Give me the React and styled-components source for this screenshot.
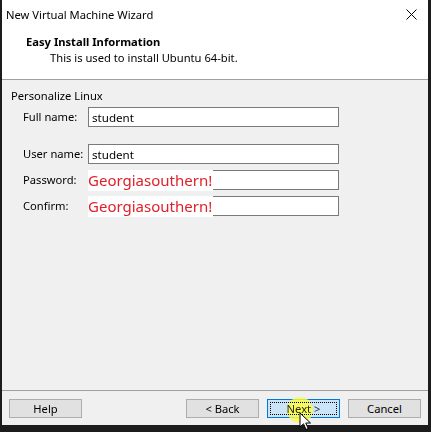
import React from 'react';
import styled, { createGlobalStyle, css } from 'styled-components';

const Global = createGlobalStyle`
  html, body {
    margin:0;
    padding:0;
    background:#1c1c1c;
  }
  body {
    font-family:"Noto Sans", "Open Sans", sans-serif;
    font-size:11.2px;
    color:#000;
  }
`;

export default function App() {
  return (
    <>
      <Global />
      <Page>
        <Window>
          <Header>
            <TitleBar>
              <Title>New Virtual Machine Wizard</Title>
              <Close>
                <svg width='11' height='11' viewBox='0 0 11 11'>
                  <path d='M0.5 0.5 L10.5 10.5 M10.5 0.5 L0.5 10.5' stroke='#000' strokeWidth='1' />
                </svg>
              </Close>
            </TitleBar>
            <Heading>Easy Install Information</Heading>
            <SubHeading>This is used to install Ubuntu 64-bit.</SubHeading>
          </Header>
          <Body>
            <GroupLabel>Personalize Linux</GroupLabel>
            <Form>
              <Row>
                <Label>Full name:</Label>
                <Field value='student' />
              </Row>
              <Row spaced>
                <Label>User name:</Label>
                <Field value='student' />
              </Row>
              <Row>
                <Label>Password:</Label>
                <FieldWrap>
                  <Field value='' />
                  <Secret>Georgiasouthern!</Secret>
                </FieldWrap>
              </Row>
              <Row>
                <Label>Confirm:</Label>
                <FieldWrap>
                  <Field value='' />
                  <Secret>Georgiasouthern!</Secret>
                </FieldWrap>
              </Row>
            </Form>
          </Body>
          <Footer>
            <Button>Help</Button>
            <Spacer />
            <Button>&lt; Back</Button>
            <Button primary>
              <Highlight />
              <Focus>Next &gt;</Focus>
              <Cursor width='14' height='20' viewBox='0 0 14 20'>
                <path d='M1 1 L1 15 L4.5 11.8 L7 17.5 L9.2 16.5 L6.8 11 L11.5 11 Z' fill='#fff' stroke='#000' strokeWidth='1' strokeLinejoin='round' />
              </Cursor>
            </Button>
            <Button>Cancel</Button>
          </Footer>
        </Window>
      </Page>
    </>
  );
}

const Page = styled.div`
  width:431px;
  height:432px;
  padding-left:2px;
  box-sizing:border-box;
`;
const Window = styled.div`
  width:426px;
  height:425px;
  background:#f0f0f0;
  display:flex;
  flex-direction:column;
`;
const Header = styled.div`
  background:#fff;
  height:79px;
  border-bottom:1px solid #a0a0a0;
  display:flex;
  flex-direction:column;
`;
const TitleBar = styled.div`
  height:30px;
  display:flex;
  align-items:center;
  padding:0 11px 2px 4px;
  box-sizing:border-box;
`;
const Title = styled.div`
  flex:1;
`;
const Close = styled.div`
  display:flex;
`;
const Heading = styled.div`
  font-weight:bold;
  margin:4px 0 0 24px;
  line-height:16px;
`;
const SubHeading = styled.div`
  margin:0 0 0 48px;
  line-height:16px;
`;
const Body = styled.div`
  flex:1;
  display:flex;
  flex-direction:column;
  padding:8px 0 0 9px;
`;
const GroupLabel = styled.div`
  line-height:16px;
`;
const Form = styled.div`
  display:flex;
  flex-direction:column;
  gap:6px;
  margin-top:3px;
  padding-left:12px;
`;
const Row = styled.div`
  display:flex;
  align-items:center;
  height:20px;
  ${({ spaced }) => spaced && css`
    margin-top:11px;
  `}
`;
const Label = styled.div`
  width:65px;
  margin-top:-1px;
`;
const FieldWrap = styled.div`
  position:relative;
  display:flex;
`;
const Field = styled.input.attrs({ readOnly: true })`
  width:251px;
  height:20px;
  box-sizing:border-box;
  border:1px solid #7a7a7a;
  background:#fff;
  font-family:"Noto Sans", "Open Sans", sans-serif;
  font-size:11.6px;
  padding:0 3px;
  outline:none;
`;
const Secret = styled.div`
  position:absolute;
  left:0;
  top:0;
  height:21px;
  background:#fff;
  color:#e0202a;
  font-size:15px;
  line-height:21px;
  padding:0 1px 0 0;
  white-space:nowrap;
`;
const Footer = styled.div`
  height:35px;
  border-top:1px solid #a0a0a0;
  display:flex;
  align-items:flex-start;
  gap:8px;
  padding:8px 7px 0 7px;
  box-sizing:border-box;
`;
const Spacer = styled.div`
  flex:1;
`;
const Button = styled.div`
  position:relative;
  width:73px;
  height:19px;
  box-sizing:border-box;
  border:1px solid #adadad;
  background:#e1e1e1;
  display:flex;
  align-items:center;
  justify-content:center;
  ${({ primary }) => primary && css`
    border-color:#0078d7;
    background:#cce4f7;
    padding:2px;
  `}
`;
const Focus = styled.div`
  position:relative;
  flex:1;
  align-self:stretch;
  border:1px dotted #000;
  display:flex;
  align-items:center;
  justify-content:center;
  color:#2a2a2a;
  mix-blend-mode:multiply;
`;
const Highlight = styled.div`
  position:absolute;
  left:19px;
  top:-3px;
  width:26px;
  height:26px;
  border-radius:50%;
  background:radial-gradient(circle, rgba(255,255,60,0.9) 0%, rgba(250,250,80,0.8) 70%, rgba(250,250,90,0) 100%);
`;
const Cursor = styled.svg`
  position:absolute;
  left:31px;
  top:12px;
`;
